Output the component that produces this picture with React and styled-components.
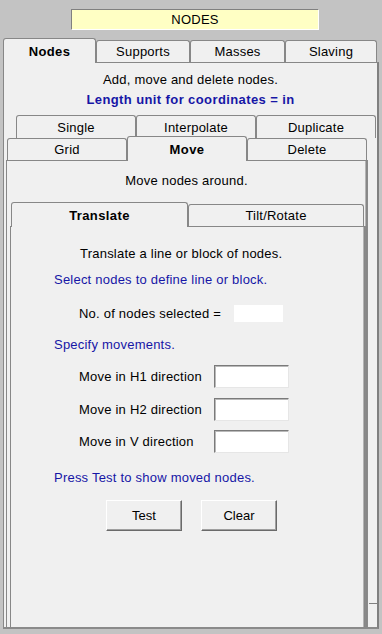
import React, { useState } from 'react';
import styled, { createGlobalStyle } from 'styled-components';

const GlobalStyle = createGlobalStyle`
  html, body {
    margin: 0;
    padding: 0;
    background: #c3c3c3;
  }
  body {
    font-family: "Liberation Sans", Arial, sans-serif;
    font-size: 13px;
    letter-spacing: 0.22px;
    color: #000;
  }
  * {
    box-sizing: border-box;
  }
`;

const Screen = styled.div`
  width: 382px;
  height: 634px;
  background: #c3c3c3;
  padding: 9px 3px 5px 3px;
  display: flex;
  flex-direction: column;
`;

const TitleBox = styled.div`
  margin-left: 68px;
  width: 248px;
  height: 21px;
  flex: none;
  display: flex;
  align-items: center;
  justify-content: center;
  background: #ffffc4;
  border: 1px solid;
  border-color: #808080 #ffffff #ffffff #808080;
  line-height: 1;
`;

const TabRow = styled.div`
  display: flex;
  align-items: flex-end;
  flex: none;
  height: ${(p) => p.$h}px;
  margin-top: ${(p) => p.$mt || 0}px;
  margin-left: ${(p) => p.$ml || 0}px;
  position: relative;
  z-index: ${(p) => (p.$front ? 3 : 2)};
`;

const Tab = styled.div`
  width: ${(p) => p.$w}px;
  height: ${(p) => (p.$active ? p.$h + 3 : p.$h)}px;
  margin-bottom: ${(p) => (p.$active ? -1 : 0)}px;
  flex: none;
  display: flex;
  align-items: center;
  justify-content: center;
  background: #f0f0f0;
  border: 1px solid #878787;
  border-bottom: none;
  border-radius: 3px 3px 0 0;
  font-weight: ${(p) => (p.$active ? 700 : 400)};
  letter-spacing: ${(p) => (p.$active ? '0.4px' : '0.22px')};
  position: relative;
  z-index: ${(p) => (p.$active ? 2 : 1)};
  cursor: default;
  user-select: none;
`;

const OuterPanel = styled.div`
  flex: 1;
  display: flex;
  flex-direction: column;
  background: #f0f0f0;
  border: 1px solid #878787;
  border-right: 2px solid #808080;
  border-bottom: 2px solid #8a8a8a;
  position: relative;
  z-index: 1;
`;

const Caption = styled.div`
  height: 16px;
  line-height: 16px;
  margin-top: ${(p) => p.$mt || 0}px;
  padding-left: ${(p) => p.$pl || 0}px;
  text-align: ${(p) => (p.$center ? 'center' : 'left')};
  color: ${(p) => (p.$blue ? '#1616a6' : '#000')};
  font-weight: ${(p) => (p.$bold ? 700 : 400)};
  letter-spacing: ${(p) => (p.$bold ? '0.4px' : '0.22px')};
  white-space: nowrap;
  flex: none;
`;

const SubTabs = styled.div`
  flex: 1;
  display: flex;
  flex-direction: column;
  margin-top: 7px;
  margin-left: 2px;
`;

const SubBody = styled.div`
  flex: 1;
  display: flex;
`;

const InnerPanel = styled.div`
  width: ${(p) => (p.$w ? `${p.$w}px` : 'auto')};
  flex: ${(p) => (p.$w ? 'none' : 1)};
  display: flex;
  flex-direction: column;
  background: #f0f0f0;
  border-top: 1px solid #878787;
  border-left: 1px solid #878787;
  border-right: 1px solid #878787;
  box-shadow: inset -1px 0 0 #b4b4b4, 1px 0 0 #8a8a8a;
  margin-left: ${(p) => p.$ml || 0}px;
  margin-right: ${(p) => p.$mr || 0}px;
  position: relative;
  z-index: 1;
`;

const SideStrip = styled.div`
  flex: 1;
  display: flex;
  flex-direction: column;
  justify-content: flex-end;
  margin-left: 2px;
`;

const StripFoot = styled.div`
  height: 24px;
  border-top: 1px solid #808080;
`;

const TransTabs = styled.div`
  flex: 1;
  display: flex;
  flex-direction: column;
  margin-top: 13px;
`;

const FieldRow = styled.div`
  display: flex;
  align-items: center;
  height: ${(p) => p.$h}px;
  margin-top: ${(p) => p.$mt}px;
  padding-left: 68px;
  flex: none;
`;

const FieldLabel = styled.span`
  width: ${(p) => p.$w}px;
  flex: none;
  white-space: nowrap;
`;

const CountBox = styled.div`
  width: 49px;
  height: 17px;
  background: #ffffff;
`;

const NumInput = styled.input`
  width: 75px;
  height: 23px;
  margin: 0;
  padding: 2px 3px;
  background: #ffffff;
  border: 1px solid;
  border-color: #7a7a7a #e6e6e6 #e6e6e6 #7a7a7a;
  box-shadow: inset 1px 1px 0 #b9b9b9;
  font: inherit;
  outline: none;
`;

const ButtonRow = styled.div`
  display: flex;
  gap: 19px;
  margin-top: 14px;
  padding-left: 95px;
  flex: none;
`;

const PushButton = styled.button`
  width: 76px;
  height: 31px;
  margin: 0;
  padding: 0;
  background: #f0f0f0;
  border: 1px solid;
  border-color: #ffffff #6a6a6a #6a6a6a #ffffff;
  box-shadow: inset -1px -1px 0 #a0a0a0;
  font: inherit;
  color: #000;
  cursor: default;
`;

const mainTabs = [
  { id: 'nodes', label: 'Nodes', w: 93 },
  { id: 'supports', label: 'Supports', w: 94 },
  { id: 'masses', label: 'Masses', w: 95 },
  { id: 'slaving', label: 'Slaving', w: 92 },
];

const backTabs = ['Single', 'Interpolate', 'Duplicate'];
const frontTabs = ['Grid', 'Move', 'Delete'];

const moveRows = [
  { label: 'Move in H1 direction', mt: 12 },
  { label: 'Move in H2 direction', mt: 10 },
  { label: 'Move in V direction', mt: 9 },
];

const App = () => {
  const [mainTab, setMainTab] = useState('nodes');
  const [nodeTab, setNodeTab] = useState('Move');
  const [moveTab, setMoveTab] = useState('translate');

  return (
    <Screen>
      <GlobalStyle />
      <TitleBox>NODES</TitleBox>

      <TabRow $h={24} $mt={8}>
        {mainTabs.map((t) => (
          <Tab
            key={t.id}
            $w={t.w}
            $h={22}
            $active={mainTab === t.id}
            onClick={() => setMainTab(t.id)}
          >
            {t.label}
          </Tab>
        ))}
      </TabRow>

      <OuterPanel>
        <Caption $mt={9} $center>Add, move and delete nodes.</Caption>
        <Caption $mt={4} $center $blue $bold>Length unit for coordinates = in</Caption>

        <SubTabs>
          <TabRow $h={23} $ml={10}>
            {backTabs.map((t) => (
              <Tab key={t} $w={120} $h={23} onClick={() => setNodeTab(t)}>
                {t}
              </Tab>
            ))}
          </TabRow>
          <TabRow $h={24} $mt={-2} $ml={1} $front>
            {frontTabs.map((t) => (
              <Tab key={t} $w={120} $h={22} $active={nodeTab === t} onClick={() => setNodeTab(t)}>
                {t}
              </Tab>
            ))}
          </TabRow>

          <SubBody>
            <InnerPanel $w={361}>
              <Caption $mt={12} $center>Move nodes around.</Caption>

              <TransTabs>
                <TabRow $h={24} $ml={4}>
                  <Tab $w={177} $h={22} $active={moveTab === 'translate'} onClick={() => setMoveTab('translate')}>
                    Translate
                  </Tab>
                  <Tab $w={176} $h={22} $active={moveTab === 'tilt'} onClick={() => setMoveTab('tilt')}>
                    Tilt/Rotate
                  </Tab>
                </TabRow>

                <InnerPanel $ml={3} $mr={1}>
                  <Caption $mt={19} $pl={69}>Translate a line or block of nodes.</Caption>
                  <Caption $mt={10} $pl={43} $blue>Select nodes to define line or block.</Caption>

                  <FieldRow $h={17} $mt={17}>
                    <FieldLabel $w={155}>No. of nodes selected =</FieldLabel>
                    <CountBox />
                  </FieldRow>

                  <Caption $mt={15} $pl={43} $blue>Specify movements.</Caption>

                  {moveRows.map((r) => (
                    <FieldRow key={r.label} $h={23} $mt={r.mt}>
                      <FieldLabel $w={135}>{r.label}</FieldLabel>
                      <NumInput type="text" defaultValue="" />
                    </FieldRow>
                  ))}

                  <Caption $mt={17} $pl={43} $blue>Press Test to show moved nodes.</Caption>

                  <ButtonRow>
                    <PushButton>Test</PushButton>
                    <PushButton>Clear</PushButton>
                  </ButtonRow>
                </InnerPanel>
              </TransTabs>
            </InnerPanel>
            <SideStrip>
              <StripFoot />
            </SideStrip>
          </SubBody>
        </SubTabs>
      </OuterPanel>
    </Screen>
  );
};

export default App;
